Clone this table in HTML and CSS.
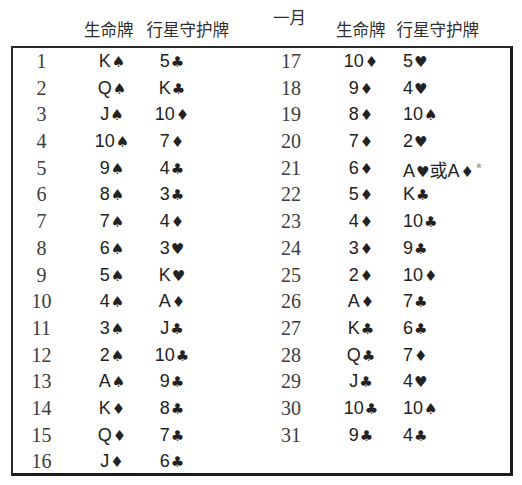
FILE: index.html
```html
<!DOCTYPE html>
<html lang="zh">
<head>
<meta charset="utf-8">
<title>生命牌 行星守护牌</title>
<link rel="stylesheet" href="styles.css">
</head>
<body>
<div class="page">
  <div class="head">
    <span class="h h-life-l">生命牌</span>
    <span class="h h-planet-l">行星守护牌</span>
    <span class="h month">一月</span>
    <span class="h h-life-r">生命牌</span>
    <span class="h h-planet-r">行星守护牌</span>
  </div>
  <div class="box">
    <div class="row"><span class="n">1</span><span class="c">K<span class="s">♠</span></span><span class="c">5<span class="s">♣</span></span><span></span><span class="n">17</span><span class="c">10<span class="s">♦</span></span><span class="p">5<span class="s">♥</span></span></div>
    <div class="row"><span class="n">2</span><span class="c">Q<span class="s">♠</span></span><span class="c">K<span class="s">♣</span></span><span></span><span class="n">18</span><span class="c">9<span class="s">♦</span></span><span class="p">4<span class="s">♥</span></span></div>
    <div class="row"><span class="n">3</span><span class="c">J<span class="s">♠</span></span><span class="c">10<span class="s">♦</span></span><span></span><span class="n">19</span><span class="c">8<span class="s">♦</span></span><span class="p">10<span class="s">♠</span></span></div>
    <div class="row"><span class="n">4</span><span class="c">10<span class="s">♠</span></span><span class="c">7<span class="s">♦</span></span><span></span><span class="n">20</span><span class="c">7<span class="s">♦</span></span><span class="p">2<span class="s">♥</span></span></div>
    <div class="row"><span class="n">5</span><span class="c">9<span class="s">♠</span></span><span class="c">4<span class="s">♣</span></span><span></span><span class="n">21</span><span class="c">6<span class="s">♦</span></span><span class="p">A<span class="s">♥</span>或A<span class="s">♦</span><span class="star">*</span></span></div>
    <div class="row"><span class="n">6</span><span class="c">8<span class="s">♠</span></span><span class="c">3<span class="s">♣</span></span><span></span><span class="n">22</span><span class="c">5<span class="s">♦</span></span><span class="p">K<span class="s">♣</span></span></div>
    <div class="row"><span class="n">7</span><span class="c">7<span class="s">♠</span></span><span class="c">4<span class="s">♦</span></span><span></span><span class="n">23</span><span class="c">4<span class="s">♦</span></span><span class="p">10<span class="s">♣</span></span></div>
    <div class="row"><span class="n">8</span><span class="c">6<span class="s">♠</span></span><span class="c">3<span class="s">♥</span></span><span></span><span class="n">24</span><span class="c">3<span class="s">♦</span></span><span class="p">9<span class="s">♣</span></span></div>
    <div class="row"><span class="n">9</span><span class="c">5<span class="s">♠</span></span><span class="c">K<span class="s">♥</span></span><span></span><span class="n">25</span><span class="c">2<span class="s">♦</span></span><span class="p">10<span class="s">♦</span></span></div>
    <div class="row"><span class="n">10</span><span class="c">4<span class="s">♠</span></span><span class="c">A<span class="s">♦</span></span><span></span><span class="n">26</span><span class="c">A<span class="s">♦</span></span><span class="p">7<span class="s">♣</span></span></div>
    <div class="row"><span class="n">11</span><span class="c">3<span class="s">♠</span></span><span class="c">J<span class="s">♣</span></span><span></span><span class="n">27</span><span class="c">K<span class="s">♣</span></span><span class="p">6<span class="s">♣</span></span></div>
    <div class="row"><span class="n">12</span><span class="c">2<span class="s">♠</span></span><span class="c">10<span class="s">♣</span></span><span></span><span class="n">28</span><span class="c">Q<span class="s">♣</span></span><span class="p">7<span class="s">♦</span></span></div>
    <div class="row"><span class="n">13</span><span class="c">A<span class="s">♠</span></span><span class="c">9<span class="s">♣</span></span><span></span><span class="n">29</span><span class="c">J<span class="s">♣</span></span><span class="p">4<span class="s">♥</span></span></div>
    <div class="row"><span class="n">14</span><span class="c">K<span class="s">♦</span></span><span class="c">8<span class="s">♣</span></span><span></span><span class="n">30</span><span class="c">10<span class="s">♣</span></span><span class="p">10<span class="s">♠</span></span></div>
    <div class="row"><span class="n">15</span><span class="c">Q<span class="s">♦</span></span><span class="c">7<span class="s">♣</span></span><span></span><span class="n">31</span><span class="c">9<span class="s">♣</span></span><span class="p">4<span class="s">♣</span></span></div>
    <div class="row"><span class="n">16</span><span class="c">J<span class="s">♦</span></span><span class="c">6<span class="s">♣</span></span><span></span><span class="n"></span><span class="c"></span><span class="p"></span></div>
  </div>
</div>
</body>
</html>
```

FILE: styles.css
```css
html, body {
  margin: 0;
  padding: 0;
  background: #ffffff;
}

.page {
  width: 522px;
  height: 485px;
  box-sizing: border-box;
  padding-left: 11px;
}

.head {
  display: flex;
  align-items: flex-start;
  height: 46px;
  font-family: "Noto Sans CJK SC", "Noto Sans", sans-serif;
  font-size: 16.5px;
  line-height: 1;
  color: #2e2e2e;
}

.h {
  padding-top: 21px;
  white-space: nowrap;
}

.h-life-l { margin-left: 73px; }
.h-planet-l { margin-left: 13px; }
.month { margin-left: 44px; padding-top: 9px; }
.h-life-r { margin-left: 30px; }
.h-planet-r { margin-left: 11px; }

.box {
  width: 502px;
  height: 430px;
  box-sizing: border-box;
  border-top: 2px solid #2a2a2a;
  border-left: 2px solid #2a2a2a;
  border-right: 3px solid #1c1c1c;
  border-bottom: 3px solid #1c1c1c;
  display: flex;
  flex-direction: column;
}

.row {
  display: grid;
  grid-template-columns: 57px 84px 36px 72px 58px 82px 1fr;
  height: 26.7px;
  line-height: 26.7px;
  white-space: nowrap;
}

.n {
  font-family: "Liberation Serif", serif;
  font-size: 20px;
  color: #3c3c3c;
  text-align: center;
}

.c, .p {
  font-family: "Liberation Sans", "Noto Sans CJK SC", sans-serif;
  font-size: 18px;
  color: #222222;
}

.c { text-align: center; }
.p { text-align: left; padding-left: 1px; }

.s {
  font-family: "DejaVu Sans", sans-serif;
  font-size: 15px;
  margin-left: 1px;
}

.star {
  font-size: 15px;
  color: #8a8a8a;
  vertical-align: 4px;
  margin-left: 2px;
}
```
